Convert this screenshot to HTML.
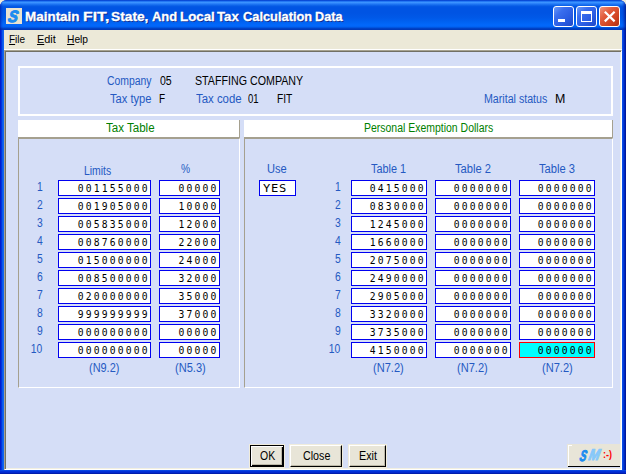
<!DOCTYPE html><html><head><meta charset="utf-8"><title>Maintain FIT, State, And Local Tax Calculation Data</title><style>
html,body{margin:0;padding:0;}
body{width:626px;height:474px;overflow:hidden;background:#EFEBD9;position:relative;font-family:'Liberation Sans',sans-serif;font-size:12px;}
#win{position:absolute;left:0;top:0;width:626px;height:474px;overflow:hidden;border-radius:7px 7px 0 0;background:#0831D9;}
#tb{position:absolute;left:0;top:0;width:626px;z-index:1;height:30px;background:linear-gradient(to bottom,#0846D2 0px,#0A4CD8 0.6px,#2478F4 1.5px,#3C94FF 2.4px,#2B82FA 3.5px,#1269EC 5px,#0458E4 6.5px,#0054E3 8px,#0054E3 13px,#0059E8 18px,#0062F2 22px,#0268FB 25px,#0266F8 26.3px,#0055E0 27.5px,#0040C4 28.6px,#0036B4 30px);}
#bl{position:absolute;left:0;top:0;width:4px;height:474px;background:linear-gradient(to right,#0016C4 0px,#0020D2 0.7px,#0034DE 1.5px,#0A58EA 2.5px,#1264F0 3.5px,#1264F0 4px);}
#br{position:absolute;left:622px;top:0;width:4px;height:474px;background:linear-gradient(to right,#0C56EA 0px,#0844E0 1px,#0030CC 2px,#0020B0 3px,#00148C 4px);}
#bb{position:absolute;left:0;top:470px;width:626px;height:4px;background:linear-gradient(to bottom,#0A50E6 0px,#0030D8 1.5px,#0024C8 3px,#001590 4px);}
#tbl,#tbr{position:absolute;top:0;height:30px;width:4px;z-index:2;}
#tbl{left:0;background:linear-gradient(to right,rgba(0,10,140,.55) 0px,rgba(0,20,170,.3) 1.2px,rgba(0,30,200,0) 3px);}
#tbr{left:622px;background:linear-gradient(to right,rgba(0,30,200,0) 0px,rgba(0,20,160,.35) 2px,rgba(0,10,110,.7) 4px);}
#icon{z-index:3;position:absolute;left:6px;top:8px;width:16px;height:16px;background:#EAE3D0;overflow:hidden;}
#icon span{position:absolute;left:1.5px;top:-2.5px;font:italic bold 16.5px/20px 'Liberation Sans',sans-serif;color:#1C8CF0;-webkit-text-stroke:1.1px #1C8CF0;transform:skewX(-10deg) scaleX(.88);transform-origin:50% 50%;}
.cb{z-index:3;position:absolute;top:6px;width:19px;height:19px;border:1px solid #fff;border-radius:3px;background:linear-gradient(135deg,#6A9AF8 0%,#3A6EEE 30%,#2A5CE2 65%,#1E48C8 100%);}
#cx{background:linear-gradient(135deg,#F0937C 0%,#E25C3C 35%,#D0421F 70%,#B03012 100%);}
#menu{position:absolute;left:4px;top:30px;width:618px;height:20px;background:#ECE9D8;}
#menu i{position:absolute;left:0;top:19px;width:618px;height:1px;background:#fff;}
#client{position:absolute;left:4px;top:50px;width:618px;height:420px;background:#D5DEF7;box-sizing:border-box;border-style:solid;border-width:1px;border-color:#A6A290 #fff #fff #A6A290;box-shadow:inset 1px 1px 0 #716F64,inset -1px -1px 0 #F1EFE2;}
#top{position:absolute;left:18px;top:66px;width:591px;height:46px;border:2px solid #fff;}
.hd{position:absolute;top:120px;height:17px;background:#fff;border-right:1px solid #A5A08F;border-bottom:1px solid #A5A08F;box-sizing:content-box;}
.gb{position:absolute;top:138px;height:248px;border-style:solid;border-width:1px;border-color:#A5A08F #fff #fff #A5A08F;}
.t{z-index:3;position:absolute;white-space:nowrap;transform-origin:0 0;}
.n{position:absolute;white-space:nowrap;font:12px/14px 'Liberation Sans',sans-serif;color:#2459C2;transform-origin:100% 0;transform:scaleX(.86);text-align:right;}
.in{position:absolute;box-sizing:border-box;height:16px;border:1px solid #0000F0;background:#fff;font:11px/14px 'DejaVu Sans Mono','Liberation Mono',monospace;text-align:right;padding-top:1px;color:#000;white-space:nowrap;overflow:hidden;}
.in b{font-weight:normal;display:block;position:absolute;right:0.4px;top:1px;letter-spacing:2.47px;transform:scaleX(.88);transform-origin:100% 0;}
.in.l b{right:auto;left:2.6px;transform-origin:0 0;letter-spacing:.65px;transform:scaleX(1.1);}
.btn{position:absolute;top:444px;height:24px;box-sizing:border-box;background:#F0ECDC;padding:1px;}
.btn i{display:block;box-sizing:border-box;width:100%;height:100%;background:#E8E5D8;border-style:solid;border-width:1px;border-color:#fff #000 #000 #fff;box-shadow:inset -1px -1px 0 #BDB9A8;}
.btn.df i{border-color:#000;box-shadow:inset 1px 1px 0 #fff,inset -1px -1px 0 #000,inset -2px -2px 0 #BDB9A8;}
</style></head><body><div id="win">
<div id="bl"></div><div id="br"></div><div id="tb"></div><div id="tbl"></div><div id="tbr"></div><div id="bb"></div>
<div id="icon"><span>S</span></div>
<div class="cb" style="left:553px"><svg width="19" height="19" style="position:absolute;left:0;top:0"><rect x="4" y="12" width="7" height="3" fill="#fff"/></svg></div>
<div class="cb" style="left:576px"><svg width="19" height="19" style="position:absolute;left:0;top:0"><rect x="4.5" y="5.5" width="10" height="9" fill="none" stroke="#fff"/><rect x="4" y="4" width="11" height="3" fill="#fff"/></svg></div>
<div class="cb" id="cx" style="left:599px"><svg width="19" height="19" style="position:absolute;left:0;top:0"><path d="M4.8 4.8 L14.6 14.4 M14.6 4.8 L4.8 14.4" stroke="#fff" stroke-width="2.2" fill="none"/></svg></div>
<div id="menu"><i></i></div>
<div id="client"></div>
<div id="top"></div>
<div class="hd" style="left:18px;width:221px"></div>
<div class="hd" style="left:244px;width:368px"></div>
<div class="gb" style="left:18px;width:220px"></div>
<div class="gb" style="left:244px;width:367px"></div>
<div class="btn df" style="left:249px;width:36px"><i></i></div>
<div class="btn" style="left:289px;width:54px"><i></i></div>
<div class="btn" style="left:348px;width:39px"><i></i></div>
<span class="t" style="left:25.19px;top:9px;font:bold 13px/16px 'Liberation Sans',sans-serif;color:#fff;transform:scaleX(1.0348);text-shadow:1px 1px 0 #0B2A8C;-webkit-text-stroke:0.3px #fff;">Maintain</span>
<span class="t" style="left:82.55px;top:9px;font:bold 13px/16px 'Liberation Sans',sans-serif;color:#fff;transform:scaleX(1.2131);text-shadow:1px 1px 0 #0B2A8C;-webkit-text-stroke:0.3px #fff;">FIT,</span>
<span class="t" style="left:111.28px;top:9px;font:bold 13px/16px 'Liberation Sans',sans-serif;color:#fff;transform:scaleX(1.0573);text-shadow:1px 1px 0 #0B2A8C;-webkit-text-stroke:0.3px #fff;">State,</span>
<span class="t" style="left:151.59px;top:9px;font:bold 13px/16px 'Liberation Sans',sans-serif;color:#fff;transform:scaleX(0.9967);text-shadow:1px 1px 0 #0B2A8C;-webkit-text-stroke:0.3px #fff;">And</span>
<span class="t" style="left:180.20px;top:9px;font:bold 13px/16px 'Liberation Sans',sans-serif;color:#fff;transform:scaleX(1.0243);text-shadow:1px 1px 0 #0B2A8C;-webkit-text-stroke:0.3px #fff;">Local</span>
<span class="t" style="left:217.48px;top:9px;font:bold 13px/16px 'Liberation Sans',sans-serif;color:#fff;transform:scaleX(1.0120);text-shadow:1px 1px 0 #0B2A8C;-webkit-text-stroke:0.3px #fff;">Tax</span>
<span class="t" style="left:242.54px;top:9px;font:bold 13px/16px 'Liberation Sans',sans-serif;color:#fff;transform:scaleX(0.9873);text-shadow:1px 1px 0 #0B2A8C;-webkit-text-stroke:0.3px #fff;">Calculation</span>
<span class="t" style="left:314.74px;top:9px;font:bold 13px/16px 'Liberation Sans',sans-serif;color:#fff;transform:scaleX(0.9749);text-shadow:1px 1px 0 #0B2A8C;-webkit-text-stroke:0.3px #fff;">Data</span>
<span class="t" style="left:9.28px;top:32px;font:11px/14px 'Liberation Sans',sans-serif;color:#000;transform:scaleX(0.9094);"><u>F</u>ile</span>
<span class="t" style="left:37.22px;top:32px;font:11px/14px 'Liberation Sans',sans-serif;color:#000;transform:scaleX(0.9932);"><u>E</u>dit</span>
<span class="t" style="left:67.27px;top:32px;font:11px/14px 'Liberation Sans',sans-serif;color:#000;transform:scaleX(0.9294);"><u>H</u>elp</span>
<span class="t" style="left:106.50px;top:74px;font:12px/14px 'Liberation Sans',sans-serif;color:#2459C2;transform:scaleX(0.8679);">Company</span>
<span class="t" style="left:109.85px;top:92px;font:12px/14px 'Liberation Sans',sans-serif;color:#2459C2;transform:scaleX(0.9286);">Tax type</span>
<span class="t" style="left:159.63px;top:74px;font:12px/14px 'Liberation Sans',sans-serif;color:#000;transform:scaleX(0.8772);">05</span>
<span class="t" style="left:159.17px;top:92px;font:12px/14px 'Liberation Sans',sans-serif;color:#000;transform:scaleX(0.8333);">F</span>
<span class="t" style="left:194.83px;top:74px;font:12px/14px 'Liberation Sans',sans-serif;color:#000;transform:scaleX(0.8898);">STAFFING COMPANY</span>
<span class="t" style="left:195.85px;top:92px;font:12px/14px 'Liberation Sans',sans-serif;color:#2459C2;transform:scaleX(0.9494);">Tax code</span>
<span class="t" style="left:247.67px;top:92px;font:12px/14px 'Liberation Sans',sans-serif;color:#000;transform:scaleX(0.7947);">01</span>
<span class="t" style="left:277.15px;top:92px;font:12px/14px 'Liberation Sans',sans-serif;color:#000;transform:scaleX(0.8529);">FIT</span>
<span class="t" style="left:484.11px;top:92px;font:12px/14px 'Liberation Sans',sans-serif;color:#2459C2;transform:scaleX(0.8868);">Marital status</span>
<span class="t" style="left:555.47px;top:92px;font:12px/14px 'Liberation Sans',sans-serif;color:#000;transform:scaleX(1.0340);">M</span>
<span class="t" style="left:105.85px;top:121px;font:12px/14px 'Liberation Sans',sans-serif;color:#008000;transform:scaleX(0.9630);">Tax Table</span>
<span class="t" style="left:364.13px;top:121px;font:12px/14px 'Liberation Sans',sans-serif;color:#008000;transform:scaleX(0.8724);">Personal Exemption Dollars</span>
<span class="t" style="left:84.13px;top:164px;font:12px/14px 'Liberation Sans',sans-serif;color:#2459C2;transform:scaleX(0.8691);">Limits</span>
<span class="t" style="left:180.65px;top:162px;font:12px/14px 'Liberation Sans',sans-serif;color:#2459C2;transform:scaleX(0.8517);">%</span>
<span class="t" style="left:267.07px;top:162px;font:12px/14px 'Liberation Sans',sans-serif;color:#2459C2;transform:scaleX(0.9250);">Use</span>
<span class="t" style="left:370.86px;top:162px;font:12px/14px 'Liberation Sans',sans-serif;color:#2459C2;transform:scaleX(0.9043);">Table 1</span>
<span class="t" style="left:455.35px;top:162px;font:12px/14px 'Liberation Sans',sans-serif;color:#2459C2;transform:scaleX(0.9314);">Table 2</span>
<span class="t" style="left:539.35px;top:162px;font:12px/14px 'Liberation Sans',sans-serif;color:#2459C2;transform:scaleX(0.9305);">Table 3</span>
<span class="t" style="left:88.85px;top:361px;font:12px/14px 'Liberation Sans',sans-serif;color:#2459C2;transform:scaleX(0.9110);">(N9.2)</span>
<span class="t" style="left:174.84px;top:361px;font:12px/14px 'Liberation Sans',sans-serif;color:#2459C2;transform:scaleX(0.9236);">(N5.3)</span>
<span class="t" style="left:373.34px;top:361px;font:12px/14px 'Liberation Sans',sans-serif;color:#2459C2;transform:scaleX(0.9236);">(N7.2)</span>
<span class="t" style="left:457.34px;top:361px;font:12px/14px 'Liberation Sans',sans-serif;color:#2459C2;transform:scaleX(0.9236);">(N7.2)</span>
<span class="t" style="left:541.84px;top:361px;font:12px/14px 'Liberation Sans',sans-serif;color:#2459C2;transform:scaleX(0.9236);">(N7.2)</span>
<span class="t" style="left:259.56px;top:449px;font:12px/14px 'Liberation Sans',sans-serif;color:#000;transform:scaleX(0.8716);">OK</span>
<span class="t" style="left:302.99px;top:449px;font:12px/14px 'Liberation Sans',sans-serif;color:#000;transform:scaleX(0.8912);">Close</span>
<span class="t" style="left:359.11px;top:449px;font:12px/14px 'Liberation Sans',sans-serif;color:#000;transform:scaleX(0.8947);">Exit</span>
<span class="n" style="right:583.3px;top:180px">1</span>
<div class="in" style="left:58px;top:180px;width:93px"><b>001155000</b></div>
<div class="in" style="left:159px;top:180px;width:61px"><b>00000</b></div>
<span class="n" style="right:285.3px;top:180px">1</span>
<div class="in" style="left:351px;top:180px;width:76px"><b>0415000</b></div>
<div class="in" style="left:435px;top:180px;width:76px"><b>0000000</b></div>
<div class="in" style="left:519px;top:180px;width:76px;"><b>0000000</b></div>
<span class="n" style="right:583.3px;top:198px">2</span>
<div class="in" style="left:58px;top:198px;width:93px"><b>001905000</b></div>
<div class="in" style="left:159px;top:198px;width:61px"><b>10000</b></div>
<span class="n" style="right:285.3px;top:198px">2</span>
<div class="in" style="left:351px;top:198px;width:76px"><b>0830000</b></div>
<div class="in" style="left:435px;top:198px;width:76px"><b>0000000</b></div>
<div class="in" style="left:519px;top:198px;width:76px;"><b>0000000</b></div>
<span class="n" style="right:583.3px;top:216px">3</span>
<div class="in" style="left:58px;top:216px;width:93px"><b>005835000</b></div>
<div class="in" style="left:159px;top:216px;width:61px"><b>12000</b></div>
<span class="n" style="right:285.3px;top:216px">3</span>
<div class="in" style="left:351px;top:216px;width:76px"><b>1245000</b></div>
<div class="in" style="left:435px;top:216px;width:76px"><b>0000000</b></div>
<div class="in" style="left:519px;top:216px;width:76px;"><b>0000000</b></div>
<span class="n" style="right:583.3px;top:234px">4</span>
<div class="in" style="left:58px;top:234px;width:93px"><b>008760000</b></div>
<div class="in" style="left:159px;top:234px;width:61px"><b>22000</b></div>
<span class="n" style="right:285.3px;top:234px">4</span>
<div class="in" style="left:351px;top:234px;width:76px"><b>1660000</b></div>
<div class="in" style="left:435px;top:234px;width:76px"><b>0000000</b></div>
<div class="in" style="left:519px;top:234px;width:76px;"><b>0000000</b></div>
<span class="n" style="right:583.3px;top:252px">5</span>
<div class="in" style="left:58px;top:252px;width:93px"><b>015000000</b></div>
<div class="in" style="left:159px;top:252px;width:61px"><b>24000</b></div>
<span class="n" style="right:285.3px;top:252px">5</span>
<div class="in" style="left:351px;top:252px;width:76px"><b>2075000</b></div>
<div class="in" style="left:435px;top:252px;width:76px"><b>0000000</b></div>
<div class="in" style="left:519px;top:252px;width:76px;"><b>0000000</b></div>
<span class="n" style="right:583.3px;top:270px">6</span>
<div class="in" style="left:58px;top:270px;width:93px"><b>008500000</b></div>
<div class="in" style="left:159px;top:270px;width:61px"><b>32000</b></div>
<span class="n" style="right:285.3px;top:270px">6</span>
<div class="in" style="left:351px;top:270px;width:76px"><b>2490000</b></div>
<div class="in" style="left:435px;top:270px;width:76px"><b>0000000</b></div>
<div class="in" style="left:519px;top:270px;width:76px;"><b>0000000</b></div>
<span class="n" style="right:583.3px;top:288px">7</span>
<div class="in" style="left:58px;top:288px;width:93px"><b>020000000</b></div>
<div class="in" style="left:159px;top:288px;width:61px"><b>35000</b></div>
<span class="n" style="right:285.3px;top:288px">7</span>
<div class="in" style="left:351px;top:288px;width:76px"><b>2905000</b></div>
<div class="in" style="left:435px;top:288px;width:76px"><b>0000000</b></div>
<div class="in" style="left:519px;top:288px;width:76px;"><b>0000000</b></div>
<span class="n" style="right:583.3px;top:306px">8</span>
<div class="in" style="left:58px;top:306px;width:93px"><b>999999999</b></div>
<div class="in" style="left:159px;top:306px;width:61px"><b>37000</b></div>
<span class="n" style="right:285.3px;top:306px">8</span>
<div class="in" style="left:351px;top:306px;width:76px"><b>3320000</b></div>
<div class="in" style="left:435px;top:306px;width:76px"><b>0000000</b></div>
<div class="in" style="left:519px;top:306px;width:76px;"><b>0000000</b></div>
<span class="n" style="right:583.3px;top:324px">9</span>
<div class="in" style="left:58px;top:324px;width:93px"><b>000000000</b></div>
<div class="in" style="left:159px;top:324px;width:61px"><b>00000</b></div>
<span class="n" style="right:285.3px;top:324px">9</span>
<div class="in" style="left:351px;top:324px;width:76px"><b>3735000</b></div>
<div class="in" style="left:435px;top:324px;width:76px"><b>0000000</b></div>
<div class="in" style="left:519px;top:324px;width:76px;"><b>0000000</b></div>
<span class="n" style="right:583.3px;top:342px">10</span>
<div class="in" style="left:58px;top:342px;width:93px"><b>000000000</b></div>
<div class="in" style="left:159px;top:342px;width:61px"><b>00000</b></div>
<span class="n" style="right:285.3px;top:342px">10</span>
<div class="in" style="left:351px;top:342px;width:76px"><b>4150000</b></div>
<div class="in" style="left:435px;top:342px;width:76px"><b>0000000</b></div>
<div class="in" style="left:519px;top:342px;width:76px;background:#00FFFF;border-color:#FF0000;"><b>0000000</b></div>
<div class="in l" style="left:259px;top:180px;width:37px"><b>YES</b></div>
<div style="position:absolute;left:567px;top:444px;width:53px;height:23px;box-sizing:border-box;background:#E8E5D8;border-bottom:1px solid #000;"><div style="position:absolute;left:0;bottom:-1px;width:1px;height:1px;background:#E8E5D8"></div><div style="position:absolute;left:1px;top:1px;width:1px;height:21px;background:#fff"></div><div style="position:absolute;left:1px;top:1px;width:4px;height:1px;background:#fff"></div></div>
<span style="position:absolute;font:italic bold 15.5px/20px 'Liberation Sans',sans-serif;white-space:nowrap;transform-origin:0 100%;top:446px;left:577.6px;color:#1C8CF0;-webkit-text-stroke:1px #1C8CF0;transform:skewX(-12deg) scaleX(.64)">S</span>
<span style="position:absolute;font:italic bold 15.5px/20px 'Liberation Sans',sans-serif;white-space:nowrap;transform-origin:0 100%;top:445px;left:587px;color:#86C8FA;-webkit-text-stroke:1px #86C8FA;transform:skewX(-12deg) scaleX(.84)">M</span>
<span style="position:absolute;left:602.5px;top:448px;font:bold 10px/14px 'Liberation Sans',sans-serif;color:#F00;white-space:nowrap;transform-origin:0 0;transform:scaleX(.9)">:-)</span>
</div></body></html>
